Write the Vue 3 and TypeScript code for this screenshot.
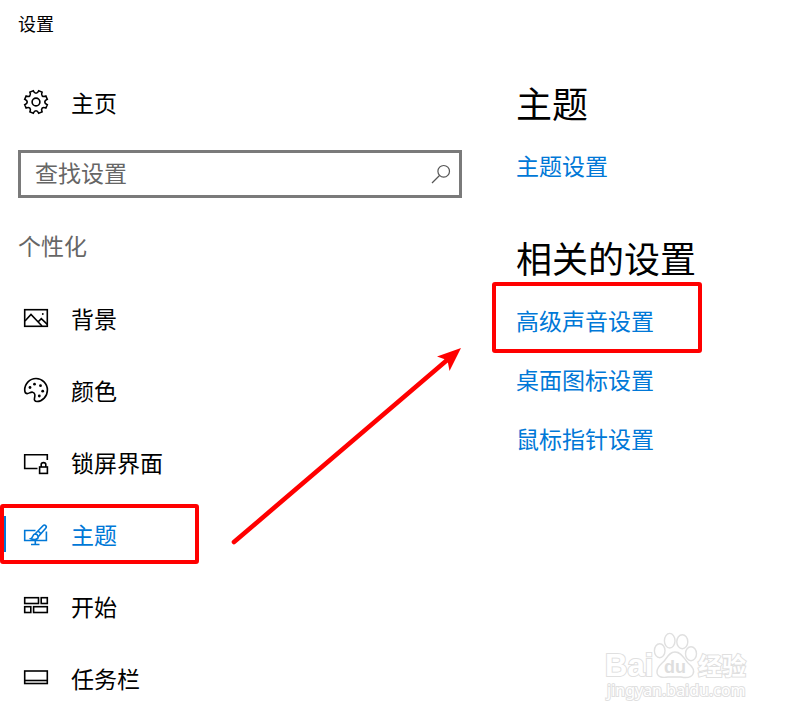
<script setup lang="ts">
import { ref } from 'vue'

type IconName = 'picture' | 'palette' | 'lock' | 'theme' | 'start' | 'taskbar'

interface NavItem {
  icon: IconName
  label: string
}

const items: NavItem[] = [
  { icon: 'picture', label: '背景' },
  { icon: 'palette', label: '颜色' },
  { icon: 'lock', label: '锁屏界面' },
  { icon: 'theme', label: '主题' },
  { icon: 'start', label: '开始' },
  { icon: 'taskbar', label: '任务栏' },
]

const related: string[] = ['高级声音设置', '桌面图标设置', '鼠标指针设置']

const selected = ref<IconName>('theme')
const query = ref('')

// Outline of an eight-toothed gear with rounded notches, in a 24 unit box.
function gearOutline(): string {
  const at = (radius: number, degrees: number) => {
    const a = (degrees * Math.PI) / 180
    return `${(12 + radius * Math.cos(a)).toFixed(2)} ${(11 + radius * Math.sin(a)).toFixed(2)}`
  }
  let path = ''
  for (let tooth = 0; tooth < 8; tooth++) {
    const mid = tooth * 45 + 22.5
    path += `${tooth ? 'L' : 'M'}${at(11.6, mid - 9)}L${at(11.6, mid + 9)}`
    path += `C${at(8, mid + 13)} ${at(8, mid + 32)} ${at(11.6, mid + 36)}`
  }
  return path + 'Z'
}

const gear = gearOutline()
</script>

<template>
  <div class="page">
    <aside class="side">
      <header class="title">设置</header>
      <a class="row" href="#home">
        <svg class="icon" viewBox="0 0 24 24" aria-hidden="true">
          <path :d="gear" />
          <circle cx="12" cy="11" r="3.9" />
        </svg>
        <span>主页</span>
      </a>

      <form class="search" role="search" @submit.prevent>
        <input v-model="query" type="text" placeholder="查找设置" aria-label="查找设置" />
        <button type="submit" aria-label="查找">
          <svg viewBox="0 0 20 20" aria-hidden="true">
            <circle cx="12.7" cy="7.3" r="5.8" />
            <path d="M8.5 11.5L1 19" />
          </svg>
        </button>
      </form>

      <h2 class="group">个性化</h2>
      <nav>
        <a
          v-for="item in items"
          :key="item.icon"
          class="row"
          :class="{ active: item.icon === selected }"
          :href="'#' + item.icon"
          @click="selected = item.icon"
        >
          <svg class="icon" viewBox="0 0 24 24" aria-hidden="true">
            <g v-if="item.icon === 'picture'">
              <rect x="0.7" y="2.7" width="22.6" height="16.6" />
              <path d="M1 14L7 7.5L18 19M14 15L17.3 11.7L23.3 17.3" />
              <circle class="solid" cx="18.8" cy="7" r="0.9" />
            </g>
            <g v-else-if="item.icon === 'palette'">
              <path d="M0.7 11C0.7 4.6 5.8 -0.5 12 -0.5S23.4 4.6 23.4 11S18.4 22.5 13 22.5C10.8 22.5 10 21 10.5 19.2C11.2 16.5 11.2 13.8 8.6 13.2C6.4 12.7 5 14.8 3 14.6C1.2 14.4 0.7 12.7 0.7 11Z" />
              <circle class="solid" cx="6" cy="8.5" r="1.4" />
              <circle class="solid" cx="10.5" cy="5.2" r="1.4" />
              <circle class="solid" cx="16.5" cy="6.7" r="1.4" />
              <circle class="solid" cx="18.7" cy="12.2" r="1.4" />
              <circle class="solid" cx="15.3" cy="17" r="1.4" />
            </g>
            <g v-else-if="item.icon === 'lock'">
              <path d="M13.5 17.5H0.7V3.7H23.3V9" />
              <rect x="15.6" y="16" width="7.8" height="6.4" />
              <path d="M17.2 16V13.5C17.2 11 21.8 11 21.8 13.5V16" />
            </g>
            <g v-else-if="item.icon === 'theme'">
              <path d="M11.5 7.5H0.7V17.5H22.4V8.5M11.3 17.5V21.5M7 21.5H15.5" />
              <path d="M11 11L19 2.7C20.8 0.9 23.4 3.3 21.7 5.2L14.2 13.8M14 8L17 10.7" />
              <path d="M11 11C8.200 11.400 9.400 14.600 6.800 15.700C10.200 17.100 14.400 16.700 14.200 13.800C13.800 12 12.600 11 11 11Z" />
            </g>
            <g v-else-if="item.icon === 'start'">
              <rect x="0.7" y="2.7" width="13.8" height="5.8" />
              <rect x="17.2" y="2.7" width="6.1" height="5.8" />
              <rect x="0.7" y="11.7" width="6.1" height="5.8" />
              <rect x="9.6" y="11.7" width="13.7" height="5.8" />
            </g>
            <g v-else>
              <rect x="0.7" y="4" width="22.6" height="12.5" />
              <path d="M1 13.5H23" />
            </g>
          </svg>
          <span>{{ item.label }}</span>
          <i v-if="item.icon === 'theme'" class="mark mark-nav"></i>
        </a>
      </nav>
    </aside>

    <main class="content">
      <h1>主题</h1>
      <a class="link" href="#theme-settings">主题设置</a>
      <h1 class="second">相关的设置</h1>
      <a v-for="(name, index) in related" :key="name" class="link" :href="'#related-' + index">
        {{ name }}
        <i v-if="index === 0" class="mark mark-link"></i>
      </a>
    </main>

    <svg class="arrow" viewBox="0 0 240 206" aria-hidden="true">
      <path class="shaft" d="M9 197L221 16" />
      <path class="head" d="M236 3L212 11.5L219 14L223 18L224.5 26Z" />
    </svg>

    <svg class="watermark" viewBox="0 0 150 76" aria-label="Baidu 经验">
      <g class="outline">
        <ellipse cx="58.7" cy="22.7" rx="5.3" ry="7" />
        <ellipse cx="68.7" cy="12.7" rx="5.3" ry="7.3" />
        <ellipse cx="81.3" cy="13.7" rx="5.5" ry="7" />
        <ellipse cx="90" cy="25.7" rx="5.5" ry="7" />
        <path d="M74 24C81 24 83 31 87 35C92 39 94 42 92 46C90 50 85 50 80 49H67C61 50 56 49 56 44C56 38 61 36 64 32C67 28 69 24 74 24Z" />
        <text class="latin" x="4" y="48">Bai</text>
        <text class="du" x="63" y="45">du</text>
        <text class="han" x="97" y="47">经验</text>
        <text class="site" x="6" y="68">jingyan.baidu.com</text>
      </g>
    </svg>
  </div>
</template>

<style>
body {
  margin: 0;
  background: #fff;
}
</style>

<style scoped>
.page {
  position: relative;
  display: grid;
  grid-template-columns: 480fr 310fr;
  min-height: 100vh;
  overflow: hidden;
  color: #000;
  font-family: 'Noto Sans CJK SC', 'Noto Sans', sans-serif;
  font-size: 23px;
  line-height: 32px;
}

.side {
  padding-top: 7px;
}

.title {
  margin-bottom: 28px;
  padding-left: 18px;
  font-size: 18px;
}

.row {
  position: relative;
  display: flex;
  align-items: center;
  gap: 23px;
  height: 72px;
  padding-left: 24px;
  color: #000;
  text-decoration: none;
}

.row span {
  padding-bottom: 3px;
}

.icon {
  flex: none;
  width: 24px;
  height: 24px;
  overflow: visible;
  fill: none;
  stroke: currentColor;
  stroke-width: 1.6;
}

.solid {
  fill: currentColor;
  stroke: none;
}

.row.active {
  color: #0078d7;
}

.active::before {
  content: '';
  position: absolute;
  left: 0;
  top: 17px;
  width: 6px;
  height: 36px;
  background: #0078d7;
}

.search {
  display: flex;
  align-items: center;
  box-sizing: border-box;
  height: 48px;
  margin: 11px 18px 0;
  border: 3px solid #7a7a7a;
}

.search input {
  flex: 1;
  min-width: 0;
  height: 40px;
  padding: 0 0 4px 14px;
  border: 0;
  outline: 0;
  background: none;
  color: #000;
  font: inherit;
}

.search input::placeholder {
  color: #666;
  opacity: 1;
}

.search button {
  display: flex;
  padding: 0 8px;
  border: 0;
  background: none;
}

.search svg {
  width: 20px;
  height: 20px;
  fill: none;
  stroke: #555;
  stroke-width: 1.2;
}

.group {
  margin: 31px 18px 22px;
  color: #666;
  font-size: 23px;
  font-weight: 400;
}

.content {
  display: flex;
  flex-direction: column;
  align-items: flex-start;
  padding: 78px 36px 0;
}

h1 {
  margin: 0;
  font-size: 36px;
  font-weight: 400;
  line-height: 48px;
}

.second {
  margin-top: 52px;
}

.link {
  position: relative;
  margin-top: 27px;
  color: #0078d7;
  text-decoration: none;
}

h1 + .link {
  margin-top: 23px;
}

.mark {
  position: absolute;
  box-sizing: border-box;
  border: 4px solid #f00;
  border-radius: 3px;
}

.mark-nav {
  left: 0;
  top: 5px;
  width: 199px;
  height: 60px;
}

.mark-link {
  left: -24px;
  top: -22px;
  width: 210px;
  height: 71px;
}

.arrow {
  position: absolute;
  left: 225px;
  top: 345px;
  width: 240px;
  height: 206px;
  pointer-events: none;
}

.shaft {
  stroke: #f00;
  stroke-width: 4.6;
  stroke-linecap: round;
}

.head {
  fill: #f00;
}

.watermark {
  position: absolute;
  right: 39px;
  bottom: 14px;
  width: 150px;
  height: 76px;
  overflow: visible;
}

.outline {
  fill: #fff;
  stroke: #e0e0e0;
  stroke-width: 1.4;
}

.outline text {
  paint-order: stroke;
  stroke-width: 2;
}

.latin {
  font: 700 31px 'Liberation Sans', sans-serif;
}

.outline .du {
  fill: #dedede;
  stroke: none;
  font: 700 18px 'Liberation Sans', sans-serif;
}

.han {
  font: 700 24px 'Noto Sans CJK SC', sans-serif;
}

.site {
  font: 400 16px 'Noto Sans', sans-serif;
}
</style>
